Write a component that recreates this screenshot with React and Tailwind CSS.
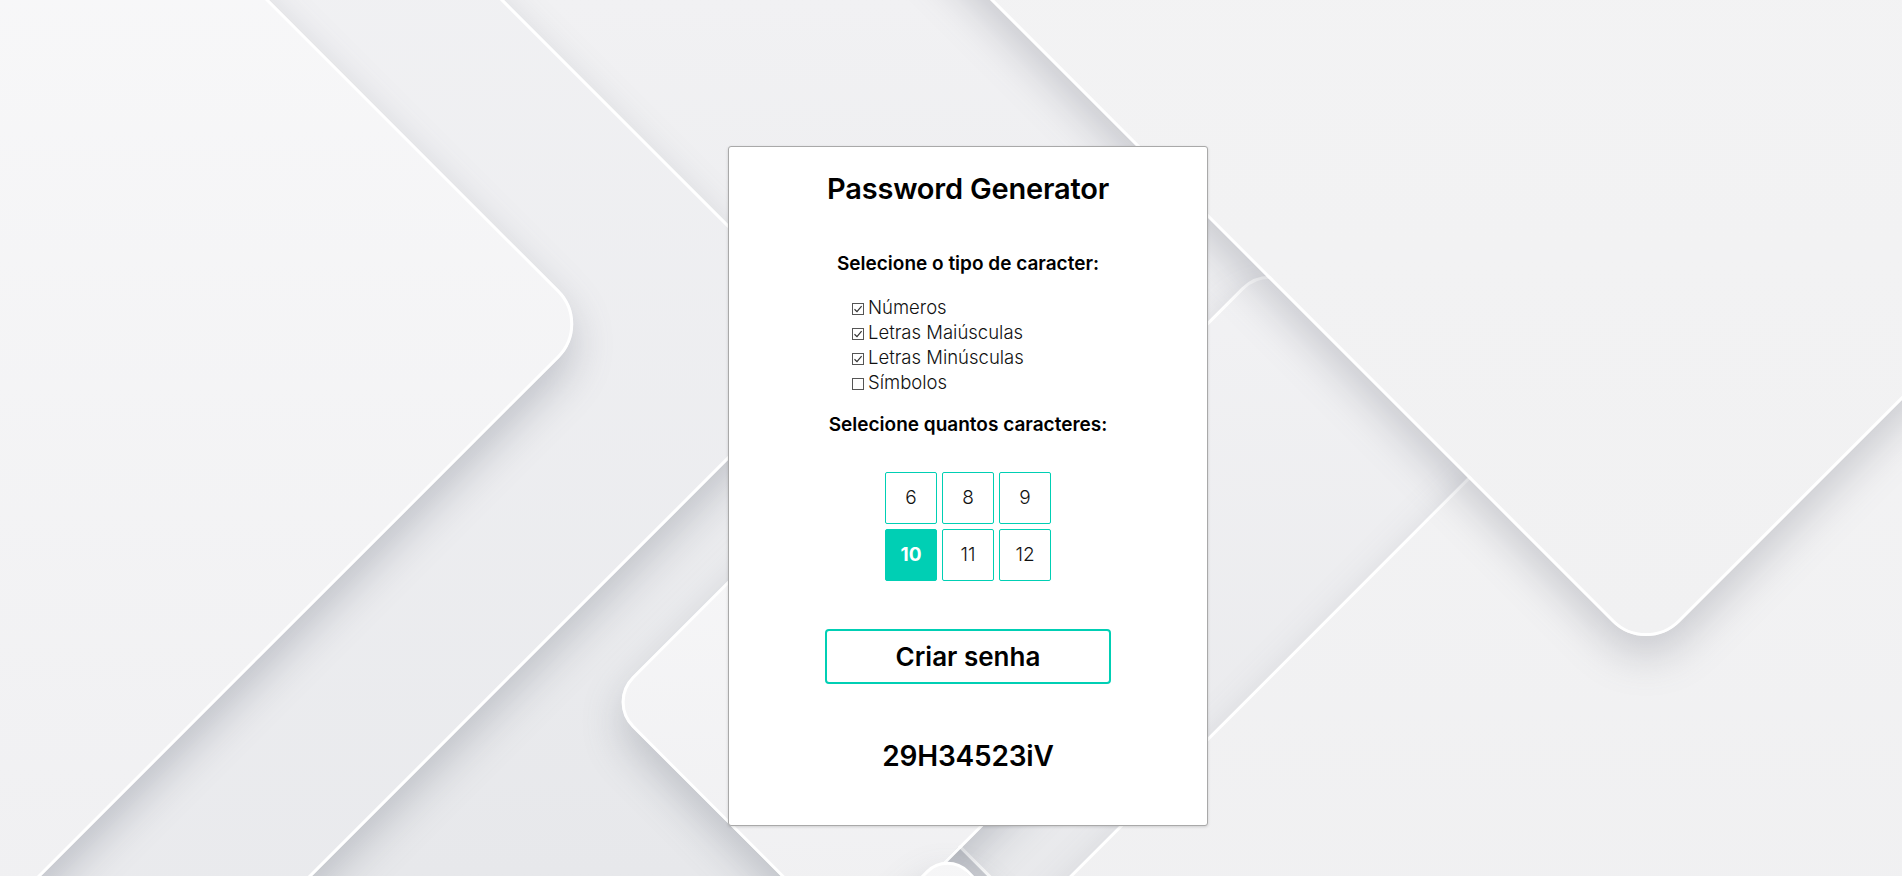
export default function App() {
  const options = [
    { label: "Números", checked: true },
    { label: "Letras Maiúsculas", checked: true },
    { label: "Letras Minúsculas", checked: true },
    { label: "Símbolos", checked: false },
  ];
  const sizes = [6, 8, 9, 10, 11, 12];
  const selected = 10;

  return (
    <div className="relative w-full h-[876px] overflow-hidden bg-[#ebecee] font-[Inter,sans-serif] text-black">
      {/* decorative background */}
      <div className="absolute inset-0 bg-linear-to-b from-[#f1f1f3] to-[#e7e8eb]" />
      <div className="absolute inset-0">
        {/* F (under D) */}
        <div className="absolute left-[952px] top-[391px] w-[636px] h-[636px] rotate-45 rounded-[40px] border-[3px] border-white bg-linear-to-br from-[#f2f2f4] to-[#e4e5e8] shadow-[14px_14px_40px_rgba(100,105,120,0.26)]" />
        {/* E */}
        <div className="absolute left-[1193px] top-[338px] w-[1414px] h-[1414px] rotate-45 rounded-[40px] border-[3px] border-white bg-linear-to-br from-[#f4f4f5] to-[#ebebed] shadow-[14px_14px_40px_rgba(100,105,120,0.26)]" />
        {/* D */}
        <div className="absolute left-[946px] top-[-1034px] w-[1400px] h-[1400px] rotate-45 rounded-[48px] border-[3px] border-white bg-linear-to-br from-[#f6f6f7] to-[#f1f1f2] shadow-[14px_14px_40px_rgba(100,105,120,0.28)]" />
        {/* B */}
        <div className="absolute left-[-361px] top-[-158px] w-[1000px] h-[1000px] rotate-45 rounded-[48px] border-[3px] border-white bg-linear-to-br from-[#f3f3f5] to-[#e8e9ec] shadow-[14px_14px_40px_rgba(100,105,120,0.3)]" />
        {/* A */}
        <div className="absolute left-[-614px] top-[-176px] w-[1000px] h-[1000px] rotate-45 rounded-[48px] border-[3px] border-white bg-linear-to-br from-[#fafafb] to-[#efeff1] shadow-[14px_14px_40px_rgba(100,105,120,0.32)]" />
        {/* C */}
        <div className="absolute left-[680px] top-[525px] w-[354px] h-[354px] rotate-45 rounded-[36px] border-[3px] border-white bg-linear-to-br from-[#f8f8f9] to-[#efeff1] shadow-[14px_14px_40px_rgba(100,105,120,0.3)]" />
        {/* G */}
        <div className="absolute left-[806px] top-[908px] w-[283px] h-[283px] rotate-45 rounded-[30px] border-[3px] border-white bg-linear-to-br from-[#f6f6f7] to-[#eeeef0] shadow-[14px_14px_40px_rgba(100,105,120,0.3)]" />
      </div>

      {/* content */}
      <div className="relative z-10 flex justify-center pl-[34px] pt-[146px]">
        <div className="w-[480px] h-[680px] bg-white border border-[#a9a9a9] rounded-[3px] shadow-[0_1px_3px_rgba(0,0,0,0.15)] flex flex-col items-center pt-[24px]">
          <h1 className="text-[29px] leading-[36px] font-semibold tracking-[-0.2px]">Password Generator</h1>

          <h2 className="mt-[45px] text-[19px] leading-[24px] font-semibold">Selecione o tipo de caracter:</h2>

          <div className="mt-[19px] self-stretch pl-[123px] flex flex-col">
            {options.map((o) => (
              <label key={o.label} className="flex h-[25px] text-[18.5px] leading-[25px] font-light text-[#111]">
                <span className="mt-[8px] w-[12px] h-[12px] shrink-0 border border-[#555] bg-white flex items-center justify-center">
                  {o.checked && (
                    <svg width="10" height="10" viewBox="0 0 10 10" fill="none">
                      <path d="M1.5 5.2 L4 7.6 L8.6 2.2" stroke="#333" strokeWidth="1.2" />
                    </svg>
                  )}
                </span>
                <span className="ml-[4px]">{o.label}</span>
              </label>
            ))}
          </div>

          <h2 className="mt-[18px] text-[19px] leading-[24px] font-semibold">Selecione quantos caracteres:</h2>

          <div className="mt-[35px] grid grid-cols-3 gap-[5px]">
            {sizes.map((n) =>
              n === selected ? (
                <button key={n} className="w-[52px] h-[52px] rounded-[2px] bg-[#00cfb4] border border-[#00cfb4] text-white text-[19px] font-bold flex items-center justify-center">
                  {n}
                </button>
              ) : (
                <button key={n} className="w-[52px] h-[52px] rounded-[2px] bg-white border border-[#00cfb4] text-[#111] text-[19px] font-light flex items-center justify-center">
                  {n}
                </button>
              )
            )}
          </div>

          <button className="mt-[48px] w-[286px] h-[55px] border-2 border-[#00cfb4] rounded-[4px] bg-white text-[26px] font-semibold flex items-center justify-center">
            Criar senha
          </button>

          <div className="mt-[54px] text-[28px] leading-[36px] font-semibold tracking-[-0.2px]">29H34523iV</div>
        </div>
      </div>
    </div>
  );
}
